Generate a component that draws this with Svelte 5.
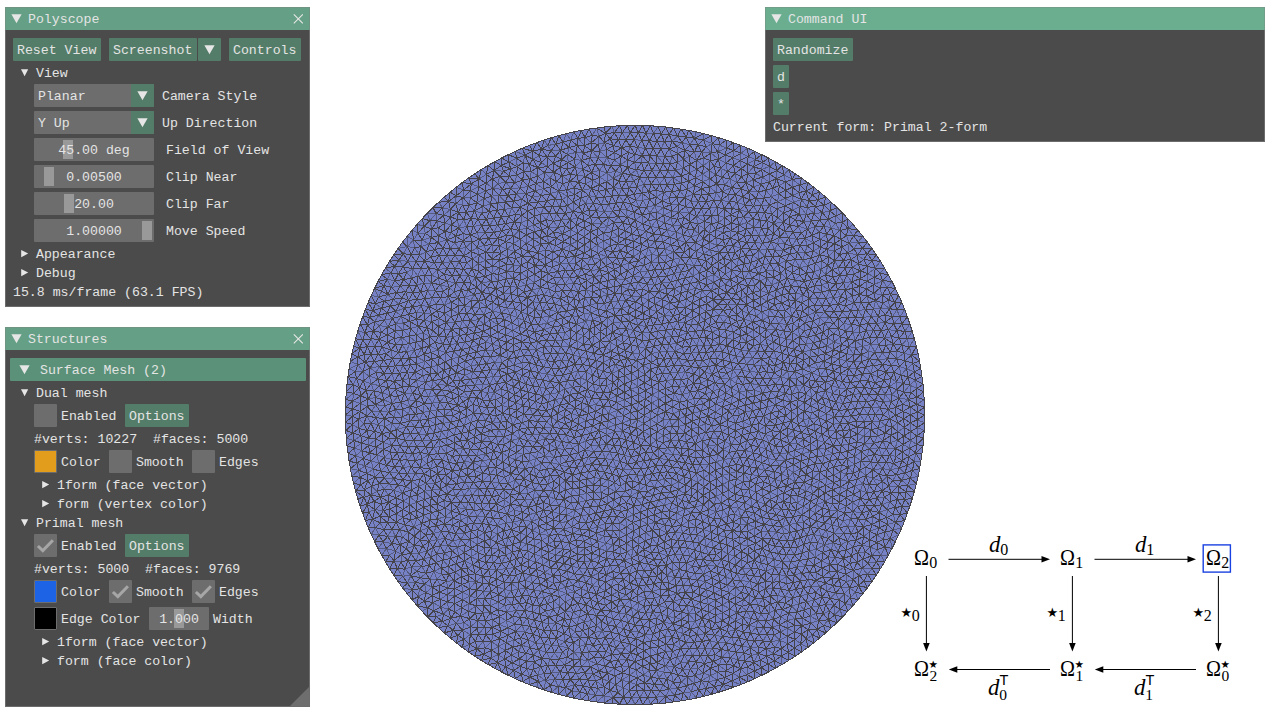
<script>
  // Random points inside a disc, relaxed by mutual repulsion, then
  // triangulated with a local Delaunay test.
  const R = 289.6;
  const SPACING = 7.75;

  function buildMesh() {
    let seed = 7;
    const rnd = () => {
      seed = (seed * 1664525 + 1013904223) >>> 0;
      return seed / 4294967296;
    };
    const xs = [];
    const ys = [];
    const rim = 236;
    for (let i = 0; i < rim; i++) {
      const a = (i / rim) * Math.PI * 2;
      xs.push(R * Math.cos(a));
      ys.push(R * Math.sin(a));
    }
    const total = 5000;
    const inner = total - rim;
    for (let i = 0; i < inner; i++) {
      const r = (R - 4.5) * Math.sqrt((i + 0.5) / inner);
      const a = i * 2.399963;
      xs.push(r * Math.cos(a) + (rnd() - 0.5) * 11);
      ys.push(r * Math.sin(a) + (rnd() - 0.5) * 11);
    }

    const cell = 17;
    const cols = Math.ceil((2 * R + 40) / cell);
    const key = (x, y) => Math.floor((y + R + 20) / cell) * cols + Math.floor((x + R + 20) / cell);
    const makeGrid = () => {
      const g = Array.from({ length: cols * cols }, () => []);
      for (let i = 0; i < total; i++) g[key(xs[i], ys[i])].push(i);
      return g;
    };
    const near = (g, i, rad) => {
      const out = [];
      const k = key(xs[i], ys[i]);
      for (let dy = -1; dy <= 1; dy++)
        for (let dx = -1; dx <= 1; dx++)
          for (const j of g[k + dy * cols + dx] || []) {
            if (j === i) continue;
            const ex = xs[j] - xs[i];
            const ey = ys[j] - ys[i];
            if (ex * ex + ey * ey < rad * rad) out.push(j);
          }
      return out;
    };

    for (let it = 0; it < 60; it++) {
      const g = makeGrid();
      const reach = SPACING * 1.3;
      for (let i = rim; i < total; i++) {
        let fx = 0;
        let fy = 0;
        for (const j of near(g, i, reach)) {
          const ex = xs[i] - xs[j];
          const ey = ys[i] - ys[j];
          const d = Math.hypot(ex, ey) || 0.01;
          const f = (reach - d) / d;
          fx += ex * f;
          fy += ey * f;
        }
        xs[i] += fx * 0.18;
        ys[i] += fy * 0.18;
        const r = Math.hypot(xs[i], ys[i]);
        if (r > R - 5) {
          xs[i] *= (R - 5) / r;
          ys[i] *= (R - 5) / r;
        }
      }
    }

    const g = makeGrid();
    const edges = new Set();
    for (let i = 0; i < total; i++) {
      const nb = near(g, i, 16);
      for (let a = 0; a < nb.length; a++) {
        const j = nb[a];
        if (j < i) continue;
        for (let b = 0; b < nb.length; b++) {
          const k = nb[b];
          if (k <= j) continue;
          const bx = xs[j] - xs[i];
          const by = ys[j] - ys[i];
          const cx = xs[k] - xs[i];
          const cy = ys[k] - ys[i];
          const det = 2 * (bx * cy - by * cx);
          if (Math.abs(det) < 1) continue;
          const b2 = bx * bx + by * by;
          const c2 = cx * cx + cy * cy;
          const ux = (cy * b2 - by * c2) / det;
          const uy = (bx * c2 - cx * b2) / det;
          const r2 = ux * ux + uy * uy;
          if (r2 > 64) continue;
          let empty = true;
          for (const m of nb) {
            if (m === j || m === k) continue;
            const mx = xs[m] - xs[i] - ux;
            const my = ys[m] - ys[i] - uy;
            if (mx * mx + my * my < r2 - 1e-6) {
              empty = false;
              break;
            }
          }
          if (empty) {
            edges.add(i * total + j);
            edges.add(i * total + k);
            edges.add(j * total + k);
          }
        }
      }
    }
    const parts = ['', ''];
    for (const e of edges) {
      const i = Math.floor(e / total);
      const j = e % total;
      const faint = j >= rim && rnd() < 0.22 ? 1 : 0;
      parts[faint] += `M${xs[i].toFixed(1)} ${ys[i].toFixed(1)}L${xs[j].toFixed(1)} ${ys[j].toFixed(1)}`;
    }
    return parts;
  }

  const [strongEdges, faintEdges] = buildMesh();

  const sliders = [
    { label: 'Field of View', value: '45.00 deg', grab: 29 },
    { label: 'Clip Near', value: '0.00500', grab: 10 },
    { label: 'Clip Far', value: '20.00', grab: 30 },
    { label: 'Move Speed', value: '1.00000', grab: 108 }
  ];
  const combos = [
    { label: 'Camera Style', value: 'Planar' },
    { label: 'Up Direction', value: 'Y Up' }
  ];
  const columns = [
    { x: 0, n: 0, dual: 2 },
    { x: 146, n: 1, dual: 1 },
    { x: 292, n: 2, dual: 0 }
  ];
</script>

{#snippet big()}
  <svg class="big" width="11" height="10" viewBox="0 0 11 10"><path d="M.4 .3H10.6L5.5 9.3Z" /></svg>
{/snippet}

{#snippet close()}
  <svg class="close" width="10" height="10" viewBox="0 0 10 10"><path d="M.8 .4 9.8 9.4M9.8 .4 .8 9.4" /></svg>
{/snippet}

{#snippet node(label, open, deep)}
  <div class="node" class:deep>
    <svg width="8" height="8" viewBox="0 0 8 8">
      <path d={open ? 'M0 .2H7.2L3.6 7.2Z' : 'M.2 0V7.2L7.2 3.6Z'} />
    </svg>
    <span>{label}</span>
  </div>
{/snippet}

{#snippet check(on)}
  <div class="box">
    {#if on}<svg width="23" height="23" viewBox="0 0 23 23"><path d="M3.9 12 8.8 16.6 18.9 6.2" /></svg>{/if}
  </div>
{/snippet}

{#snippet meshInfo(on, verts, faces, color)}
  <div class="row sub">
    {@render check(on)}<span class="lab enabled">Enabled</span><button>Options</button>
  </div>
  <div class="text sub">#verts: {verts}&nbsp; #faces: {faces}</div>
  <div class="row sub">
    <div class="swatch" style:background={color}></div><span class="lab color">Color</span>
    {@render check(on)}<span class="lab smooth">Smooth</span>
    {@render check(on)}<span class="lab">Edges</span>
  </div>
{/snippet}

<main>
  <svg class="mesh" width="582" height="582" viewBox="-291 -291 582 582">
    <circle r="289.6" fill="#7782c6" />
    <path class="faint" d={faintEdges} />
    <path d={strongEdges} />
  </svg>

  <svg class="diagram" width="374" height="186" viewBox="900 530 374 186">
    {#each columns as c}
      <g transform="translate({c.x} 0)">
        <text class="m" x="914" y="564.8" textLength="15" lengthAdjust="spacingAndGlyphs">Ω</text>
        <text class="s" x="929.3" y="568.4">{c.n}</text>
        <path class="line" d="M926.4 576V646" />
        <path d="M926.4 651.5 923.1 643H929.7Z" />
        <text class="star" x="900.6" y="617">★</text>
        <text class="s" x="911.8" y="620.8">{c.n}</text>
        <text class="m" x="914" y="675.6" textLength="15" lengthAdjust="spacingAndGlyphs">Ω</text>
        <text class="s low" x="929.4" y="680.8">{c.dual}</text>
        <text class="star sup" x="928.6" y="667.8">★</text>
      </g>
    {/each}
    {#each columns.slice(0, 2) as c}
      <g transform="translate({c.x} 0)">
        <path class="line" d="M948.5 559.3H1044" />
        <path d="M1050 559.3 1041.5 556V562.6Z" />
        <text class="m i" x="989" y="551.8">d</text>
        <text class="s" x="1000.2" y="554.6">{c.n}</text>
        <path class="line" d="M1050 669.5H955" />
        <path d="M948.8 669.5 957.3 666.2V672.8Z" />
        <text class="m i" x="988" y="694.8">d</text>
        <text class="s low" x="999.2" y="699.6">{c.n}</text>
        <text class="t" x="999.6" y="685">T</text>
      </g>
    {/each}
    <rect x="1203.2" y="544.9" width="27.2" height="27.2" />
  </svg>

  <section class="win polyscope">
    <header>{@render big()}<span>Polyscope</span>{@render close()}</header>
    <div class="body">
      <div class="row">
        <button>Reset View</button>
        <button class="shot">Screenshot</button>
        <button class="drop">{@render big()}</button>
        <button class="controls">Controls</button>
      </div>
      {@render node('View', true, false)}
      {#each combos as c}
        <div class="row sub">
          <div class="combo"><span>{c.value}</span><i>{@render big()}</i></div>
          <span class="clab">{c.label}</span>
        </div>
      {/each}
      {#each sliders as s}
        <div class="row sub">
          <div class="slider"><b style:left="{s.grab}px"></b><span>{s.value}</span></div>
          <span class="slab">{s.label}</span>
        </div>
      {/each}
      {@render node('Appearance', false, false)}
      {@render node('Debug', false, false)}
      <div class="text">15.8 ms/frame (63.1 FPS)</div>
    </div>
  </section>

  <section class="win structures">
    <header>{@render big()}<span>Structures</span>{@render close()}</header>
    <div class="body">
      <div class="group">{@render big()}<span>Surface Mesh (2)</span></div>
      {@render node('Dual mesh', true, false)}
      {@render meshInfo(false, '10227', '5000', '#e39d1d')}
      {@render node('1form (face vector)', false, true)}
      {@render node('form (vertex color)', false, true)}
      {@render node('Primal mesh', true, false)}
      {@render meshInfo(true, '5000', '9769', '#1c63e6')}
      <div class="row sub">
        <div class="swatch" style:background="#000"></div><span class="lab edge">Edge Color</span>
        <div class="slider small"><b style:left="25px"></b><span>1.000</span></div>
        <span class="lab">Width</span>
      </div>
      {@render node('1form (face vector)', false, true)}
      {@render node('form (face color)', false, true)}
    </div>
    <svg class="grip" width="19" height="19" viewBox="0 0 19 19"><path d="M19 0V19H0Z" /></svg>
  </section>

  <section class="win command">
    <header>{@render big()}<span>Command UI</span></header>
    <div class="body">
      <button>Randomize</button>
      <button>d</button>
      <button>*</button>
      <div class="text">Current form: Primal 2-form</div>
    </div>
  </section>
</main>

<style>
  :global(body) {
    margin: 0;
    background: #fff;
  }
  main {
    position: relative;
    width: 1274px;
    height: 716px;
    overflow: hidden;
    background: #fff;
    font: 13.22px/15px 'Liberation Mono', monospace;
    color: #e4e4e4;
    white-space: nowrap;
  }
  svg {
    display: block;
    flex: none;
  }
  .mesh {
    position: absolute;
    left: 344px;
    top: 124px;
    shape-rendering: crispEdges;
  }
  .mesh path {
    fill: none;
    stroke: #434349;
    stroke-width: 1;
  }
  .mesh .faint {
    stroke: #565b80;
  }
  .diagram {
    position: absolute;
    left: 900px;
    top: 530px;
    fill: #000;
    font-family: 'Liberation Serif', serif;
  }
  .diagram .line {
    stroke: #000;
    stroke-width: 1;
  }
  .diagram rect {
    fill: none;
    stroke: #1a41e2;
    stroke-width: 1.4;
  }
  .m {
    font-size: 22.8px;
  }
  .i {
    font-style: italic;
  }
  .s {
    font-size: 16px;
  }
  .low {
    font-size: 15.5px;
  }
  .star {
    font: 13px 'DejaVu Sans', sans-serif;
  }
  .sup {
    font-size: 10.5px;
  }
  .t {
    font: 14.5px 'Liberation Sans', sans-serif;
  }
  .win {
    position: absolute;
    box-sizing: border-box;
    border: 1px solid #6c6c6c;
    background: #4b4b4b;
  }
  .polyscope {
    left: 5px;
    top: 7px;
    width: 305px;
    height: 300px;
  }
  .structures {
    left: 5px;
    top: 327px;
    width: 305px;
    height: 380px;
  }
  .command {
    left: 765px;
    top: 7px;
    width: 500px;
    height: 135px;
  }
  header {
    display: flex;
    align-items: center;
    height: 22px;
    padding: 0 6px 0 5px;
    background: #659f85;
    box-shadow: 0 0 0 1px #709483;
    clip-path: inset(-1px -1px 0 -1px);
  }
  .command header {
    background: #6aae8f;
    box-shadow: 0 0 0 1px #729d89;
  }
  header span {
    flex: 1;
    margin-left: 6px;
  }
  .big {
    fill: #e6e6e6;
  }
  .close path {
    fill: none;
    stroke: #e6e6e6;
    stroke-width: 1.1;
  }
  .body {
    display: flex;
    flex-direction: column;
    align-items: flex-start;
    gap: 4px;
    padding: 8px 7px;
  }
  .row {
    display: flex;
    align-items: center;
    height: 23px;
  }
  .row > span,
  .node span,
  .group span {
    padding-top: 2px;
  }
  .sub {
    margin-left: 21px;
  }
  .text {
    height: 15px;
    line-height: 17px;
  }
  button {
    height: 23px;
    padding: 5px 4px 3px;
    border: 0;
    border-radius: 1px;
    background: #547d69;
    color: inherit;
    font: inherit;
    text-align: left;
  }
  .polyscope button {
    width: 88px;
  }
  .polyscope .shot {
    margin-left: 8px;
  }
  .polyscope .drop {
    width: 23px;
    margin-left: 1px;
    padding: 0 6px;
  }
  .polyscope .controls {
    width: 72px;
    margin-left: 8px;
  }
  .structures button {
    width: 64px;
  }
  .command button:first-child {
    width: 80px;
  }
  .node {
    display: flex;
    align-items: center;
    height: 15px;
    margin-left: 8px;
  }
  .deep {
    margin-left: 29px;
  }
  .node svg {
    fill: #e6e6e6;
  }
  .node span {
    margin-left: 7px;
  }
  .combo {
    display: flex;
    width: 120px;
    height: 23px;
    border-radius: 1px;
    background: #6d6d6d;
    overflow: hidden;
  }
  .combo span {
    flex: 1;
    padding: 5px 4px 3px;
  }
  .combo i {
    display: flex;
    align-items: center;
    justify-content: center;
    width: 23px;
    background: #547d69;
  }
  .clab {
    margin-left: 8px;
  }
  .slab {
    margin-left: 12px;
  }
  .slider {
    position: relative;
    width: 120px;
    height: 23px;
    border-radius: 1px;
    background: #6d6d6d;
    line-height: 25px;
    text-align: center;
  }
  .slider b {
    position: absolute;
    top: 2px;
    width: 10px;
    height: 19px;
    background: #999;
  }
  .slider span {
    position: relative;
  }
  .small {
    width: 60px;
  }
  .group {
    display: flex;
    align-items: center;
    box-sizing: border-box;
    width: 296px;
    height: 23px;
    margin-left: -3px;
    padding-left: 9px;
    border-radius: 1px;
    background: #5a9178;
  }
  .group span {
    margin-left: 10px;
  }
  .box,
  .swatch {
    box-sizing: border-box;
    flex: none;
    width: 23px;
    height: 23px;
    border-radius: 1px;
    background: #6d6d6d;
  }
  .swatch {
    border: 1px solid #6d6d6d;
  }
  .box path {
    fill: none;
    stroke: #a6a6a6;
    stroke-width: 3;
  }
  .lab {
    margin-left: 4px;
  }
  .enabled {
    width: 60px;
    margin-right: 4px;
  }
  .color {
    width: 48px;
  }
  .smooth {
    width: 56px;
  }
  .edge {
    width: 88px;
  }
  .grip {
    position: absolute;
    right: 0;
    bottom: 0;
    fill: #6e6e6e;
  }
</style>
